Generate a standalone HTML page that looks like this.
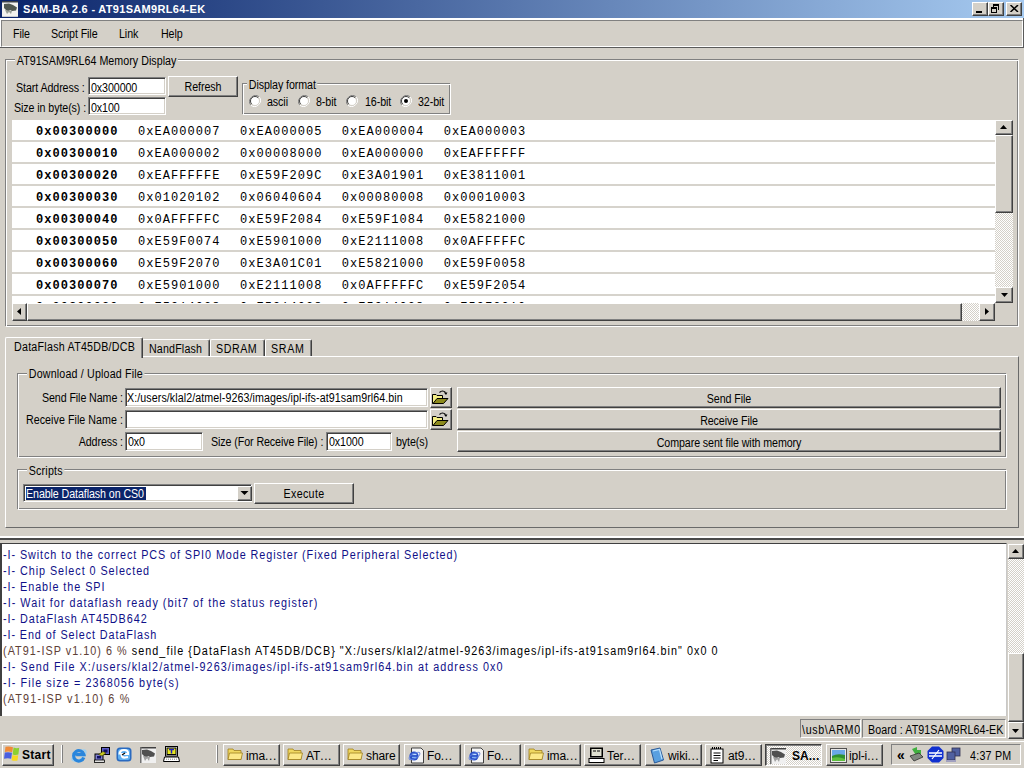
<!DOCTYPE html>
<html><head><meta charset="utf-8">
<style>
*{margin:0;padding:0;box-sizing:border-box}
html,body{width:1024px;height:768px;overflow:hidden;background:#d4d0c8;font-family:"Liberation Sans",sans-serif;font-size:11px;color:#000}
.a{position:absolute}
.t{position:absolute;white-space:nowrap;line-height:13px;font-size:12px;letter-spacing:-0.1px;transform:scaleX(0.89);transform-origin:0 0}
.gt{background:#d4d0c8;padding:0 2px;margin-left:-2px}
.rz{background:#d4d0c8;border-top:1px solid #fff;border-left:1px solid #fff;border-right:1px solid #404040;border-bottom:1px solid #404040;box-shadow:inset -1px -1px 0 #808080}
.sk{background:#fff;border-top:1px solid #808080;border-left:1px solid #808080;border-right:1px solid #fff;border-bottom:1px solid #fff;box-shadow:inset 1px 1px 0 #404040,inset -1px -1px 0 #d4d0c8}
.mono{position:absolute;white-space:nowrap;font-family:"Liberation Mono",monospace;font-size:12px;line-height:15px;letter-spacing:1.05px}
.log{position:absolute;white-space:nowrap;font-size:12px;line-height:16px;letter-spacing:0.35px;color:#101088;transform:scaleX(0.9);transform-origin:0 0}
.dith{background-color:#fff;background-image:linear-gradient(45deg,#d4d0c8 25%,transparent 25%,transparent 75%,#d4d0c8 75%),linear-gradient(45deg,#d4d0c8 25%,transparent 25%,transparent 75%,#d4d0c8 75%);background-size:2px 2px;background-position:0 0,1px 1px}
</style></head><body>
<div class="a " style="left:0px;top:0px;width:1024px;height:18px;background:linear-gradient(to right,#0a246a,#a6caf0)"></div>
<svg class="a" style="left:2px;top:1px" width="16" height="16" viewBox="0 0 16 16">
<rect x="0" y="0" width="16" height="16" fill="#f2f2ee"/>
<rect x="0" y="0" width="16" height="1.5" fill="#3a4048"/>
<rect x="0" y="15" width="16" height="1" fill="#c8ccd0"/>
<path d="M2 3 L7 2.5 L11 4 L15 6.5 L14 9.5 L10 10 L8 9 L6 11 L4 9 L2 7 Z" fill="#505850"/>
<path d="M3 9 L5 13 L7 11 L9 13 L10 10 Z" fill="#9aa098"/>
</svg>
<div class="t" style="left:23px;top:3px;color:#fff;font-weight:bold;font-size:11px;letter-spacing:0.31px;transform:none">SAM-BA 2.6 - AT91SAM9RL64-EK</div>
<div class="a rz" style="left:972px;top:2px;width:16px;height:14px;"></div>
<div class="a rz" style="left:988px;top:2px;width:16px;height:14px;"></div>
<div class="a rz" style="left:1006px;top:2px;width:16px;height:14px;"></div>
<div class="a " style="left:976px;top:11px;width:6px;height:2px;background:#000"></div>
<div class="a" style="left:991px;top:7px;width:6px;height:6px;border:1px solid #000;border-top-width:2px"></div>
<div class="a" style="left:993px;top:4px;width:6px;height:6px;border:1px solid #000;border-top-width:2px;border-left:none;border-bottom:none"></div>
<div class="a " style="left:993px;top:4px;width:1px;height:3px;background:#000"></div>
<svg class="a" style="left:1010px;top:5px" width="9" height="7" viewBox="0 0 9 7"><path d="M0.5 0 L8 7 M8 0 L0.5 7" stroke="#000" stroke-width="1.5"/></svg>
<div class="a " style="left:0px;top:18px;width:1024px;height:2px;background:#fff"></div>
<div class="a " style="left:0px;top:18px;width:1px;height:30px;background:#fff"></div>
<div class="a " style="left:0px;top:47px;width:1024px;height:1px;background:#5a5a5a"></div>
<div class="a " style="left:1023px;top:18px;width:1px;height:30px;background:#5a5a5a"></div>
<div class="a" style="left:1px;top:20px;width:1022px;height:27px;border-top:1px solid #808080;border-left:1px solid #808080;border-right:1px solid #fff;border-bottom:1px solid #fff"></div>
<div class="t" style="left:13px;top:28px;">File</div>
<div class="t" style="left:51px;top:28px;">Script File</div>
<div class="t" style="left:119px;top:28px;">Link</div>
<div class="t" style="left:161px;top:28px;">Help</div>
<div class="a" style="left:5px;top:59px;width:1013px;height:267px;border:1px solid #808080"></div>
<div class="a" style="left:6px;top:60px;width:1013px;height:267px;border:1px solid #fff;border-right:none;border-bottom:none"></div>
<div class="a" style="left:6px;top:326px;width:1013px;height:1px;background:#fff"></div>
<div class="a" style="left:1018px;top:60px;width:1px;height:267px;background:#fff"></div>
<div class="t gt" style="left:17px;top:55px;letter-spacing:0.03px">AT91SAM9RL64 Memory Display</div>
<div class="t" style="left:16px;top:82px;">Start Address :</div>
<div class="t" style="left:14px;top:102px;">Size in byte(s) :</div>
<div class="a sk" style="left:88px;top:77px;width:78px;height:18px;"></div>
<div class="t" style="left:91px;top:82px;">0x300000</div>
<div class="a sk" style="left:88px;top:97px;width:78px;height:18px;"></div>
<div class="t" style="left:91px;top:102px;">0x100</div>
<div class="a rz" style="left:168px;top:76px;width:70px;height:21px;"></div>
<div class="t" style="left:168px;top:81px;width:70px;text-align:center;transform-origin:50% 0">Refresh</div>
<div class="a" style="left:242px;top:83px;width:208px;height:31px;border:1px solid #808080"></div>
<div class="a" style="left:243px;top:84px;width:208px;height:31px;border:1px solid #fff;border-right:none;border-bottom:none"></div>
<div class="a" style="left:243px;top:114px;width:208px;height:1px;background:#fff"></div>
<div class="a" style="left:450px;top:84px;width:1px;height:31px;background:#fff"></div>
<div class="t gt" style="left:249px;top:79px;">Display format</div>
<svg class="a" style="left:249px;top:95px" width="12" height="12" viewBox="0 0 12 12">
<path d="M10.2 1.8 A6 6 0 0 0 1.8 10.2" stroke="#808080" stroke-width="1" fill="none"/>
<path d="M1.8 10.2 A6 6 0 0 0 10.2 1.8" stroke="#fff" stroke-width="1" fill="none"/>
<circle cx="6" cy="6" r="4.5" fill="#fff"/>
<path d="M9.2 2.8 A4.5 4.5 0 0 0 2.8 9.2" stroke="#404040" stroke-width="1" fill="none"/>
<path d="M2.8 9.2 A4.5 4.5 0 0 0 9.2 2.8" stroke="#d4d0c8" stroke-width="1" fill="none"/>

</svg>
<div class="t" style="left:267px;top:96px;">ascii</div>
<svg class="a" style="left:298px;top:95px" width="12" height="12" viewBox="0 0 12 12">
<path d="M10.2 1.8 A6 6 0 0 0 1.8 10.2" stroke="#808080" stroke-width="1" fill="none"/>
<path d="M1.8 10.2 A6 6 0 0 0 10.2 1.8" stroke="#fff" stroke-width="1" fill="none"/>
<circle cx="6" cy="6" r="4.5" fill="#fff"/>
<path d="M9.2 2.8 A4.5 4.5 0 0 0 2.8 9.2" stroke="#404040" stroke-width="1" fill="none"/>
<path d="M2.8 9.2 A4.5 4.5 0 0 0 9.2 2.8" stroke="#d4d0c8" stroke-width="1" fill="none"/>

</svg>
<div class="t" style="left:316px;top:96px;">8-bit</div>
<svg class="a" style="left:346px;top:95px" width="12" height="12" viewBox="0 0 12 12">
<path d="M10.2 1.8 A6 6 0 0 0 1.8 10.2" stroke="#808080" stroke-width="1" fill="none"/>
<path d="M1.8 10.2 A6 6 0 0 0 10.2 1.8" stroke="#fff" stroke-width="1" fill="none"/>
<circle cx="6" cy="6" r="4.5" fill="#fff"/>
<path d="M9.2 2.8 A4.5 4.5 0 0 0 2.8 9.2" stroke="#404040" stroke-width="1" fill="none"/>
<path d="M2.8 9.2 A4.5 4.5 0 0 0 9.2 2.8" stroke="#d4d0c8" stroke-width="1" fill="none"/>

</svg>
<div class="t" style="left:365px;top:96px;">16-bit</div>
<svg class="a" style="left:400px;top:95px" width="12" height="12" viewBox="0 0 12 12">
<path d="M10.2 1.8 A6 6 0 0 0 1.8 10.2" stroke="#808080" stroke-width="1" fill="none"/>
<path d="M1.8 10.2 A6 6 0 0 0 10.2 1.8" stroke="#fff" stroke-width="1" fill="none"/>
<circle cx="6" cy="6" r="4.5" fill="#fff"/>
<path d="M9.2 2.8 A4.5 4.5 0 0 0 2.8 9.2" stroke="#404040" stroke-width="1" fill="none"/>
<path d="M2.8 9.2 A4.5 4.5 0 0 0 9.2 2.8" stroke="#d4d0c8" stroke-width="1" fill="none"/>
<circle cx="6" cy="6" r="2" fill="#000"/>
</svg>
<div class="t" style="left:418px;top:96px;">32-bit</div>
<div class="a " style="left:12px;top:120px;width:983px;height:183px;background:#fff"></div>
<div class="a" style="left:12px;top:120px;width:983px;height:183px;overflow:hidden">
<div class="a" style="left:0;top:20px;width:983px;height:2px;background:#d6d3cc"></div>
<div class="mono" style="left:24px;top:5px;font-weight:bold">0x00300000</div>
<div class="mono" style="left:126.0px;top:5px">0xEA000007</div>
<div class="mono" style="left:227.9px;top:5px">0xEA000005</div>
<div class="mono" style="left:329.8px;top:5px">0xEA000004</div>
<div class="mono" style="left:431.70000000000005px;top:5px">0xEA000003</div>
<div class="a" style="left:0;top:42px;width:983px;height:2px;background:#d6d3cc"></div>
<div class="mono" style="left:24px;top:27px;font-weight:bold">0x00300010</div>
<div class="mono" style="left:126.0px;top:27px">0xEA000002</div>
<div class="mono" style="left:227.9px;top:27px">0x00008000</div>
<div class="mono" style="left:329.8px;top:27px">0xEA000000</div>
<div class="mono" style="left:431.70000000000005px;top:27px">0xEAFFFFFF</div>
<div class="a" style="left:0;top:64px;width:983px;height:2px;background:#d6d3cc"></div>
<div class="mono" style="left:24px;top:49px;font-weight:bold">0x00300020</div>
<div class="mono" style="left:126.0px;top:49px">0xEAFFFFFE</div>
<div class="mono" style="left:227.9px;top:49px">0xE59F209C</div>
<div class="mono" style="left:329.8px;top:49px">0xE3A01901</div>
<div class="mono" style="left:431.70000000000005px;top:49px">0xE3811001</div>
<div class="a" style="left:0;top:86px;width:983px;height:2px;background:#d6d3cc"></div>
<div class="mono" style="left:24px;top:71px;font-weight:bold">0x00300030</div>
<div class="mono" style="left:126.0px;top:71px">0x01020102</div>
<div class="mono" style="left:227.9px;top:71px">0x06040604</div>
<div class="mono" style="left:329.8px;top:71px">0x00080008</div>
<div class="mono" style="left:431.70000000000005px;top:71px">0x00010003</div>
<div class="a" style="left:0;top:108px;width:983px;height:2px;background:#d6d3cc"></div>
<div class="mono" style="left:24px;top:93px;font-weight:bold">0x00300040</div>
<div class="mono" style="left:126.0px;top:93px">0x0AFFFFFC</div>
<div class="mono" style="left:227.9px;top:93px">0xE59F2084</div>
<div class="mono" style="left:329.8px;top:93px">0xE59F1084</div>
<div class="mono" style="left:431.70000000000005px;top:93px">0xE5821000</div>
<div class="a" style="left:0;top:130px;width:983px;height:2px;background:#d6d3cc"></div>
<div class="mono" style="left:24px;top:115px;font-weight:bold">0x00300050</div>
<div class="mono" style="left:126.0px;top:115px">0xE59F0074</div>
<div class="mono" style="left:227.9px;top:115px">0xE5901000</div>
<div class="mono" style="left:329.8px;top:115px">0xE2111008</div>
<div class="mono" style="left:431.70000000000005px;top:115px">0x0AFFFFFC</div>
<div class="a" style="left:0;top:152px;width:983px;height:2px;background:#d6d3cc"></div>
<div class="mono" style="left:24px;top:137px;font-weight:bold">0x00300060</div>
<div class="mono" style="left:126.0px;top:137px">0xE59F2070</div>
<div class="mono" style="left:227.9px;top:137px">0xE3A01C01</div>
<div class="mono" style="left:329.8px;top:137px">0xE5821000</div>
<div class="mono" style="left:431.70000000000005px;top:137px">0xE59F0058</div>
<div class="a" style="left:0;top:174px;width:983px;height:2px;background:#d6d3cc"></div>
<div class="mono" style="left:24px;top:159px;font-weight:bold">0x00300070</div>
<div class="mono" style="left:126.0px;top:159px">0xE5901000</div>
<div class="mono" style="left:227.9px;top:159px">0xE2111008</div>
<div class="mono" style="left:329.8px;top:159px">0x0AFFFFFC</div>
<div class="mono" style="left:431.70000000000005px;top:159px">0xE59F2054</div>
<div class="mono" style="left:24px;top:181px;font-weight:bold">0x00300080</div>
<div class="mono" style="left:126.0px;top:181px">0xE5914028</div>
<div class="mono" style="left:227.9px;top:181px">0xE5914028</div>
<div class="mono" style="left:329.8px;top:181px">0xE5914028</div>
<div class="mono" style="left:431.70000000000005px;top:181px">0xE59F2010</div>
</div>
<div class="a dith" style="left:995px;top:120px;width:18px;height:183px;"></div>
<div class="a rz" style="left:995px;top:120px;width:18px;height:15px;"></div>
<svg class="a" style="left:1000px;top:125px" width="7" height="4"><path d="M3.5 0 L7 4 L0 4 Z" fill="#000"/></svg>
<div class="a rz" style="left:995px;top:135px;width:18px;height:78px;"></div>
<div class="a rz" style="left:995px;top:287px;width:18px;height:16px;"></div>
<svg class="a" style="left:1001px;top:293px" width="7" height="4"><path d="M0 0 L7 0 L3.5 4 Z" fill="#000"/></svg>
<div class="a dith" style="left:12px;top:303px;width:983px;height:18px;"></div>
<div class="a rz" style="left:12px;top:303px;width:15px;height:18px;"></div>
<svg class="a" style="left:17px;top:308px" width="4" height="7"><path d="M4 0 L4 7 L0 3.5 Z" fill="#000"/></svg>
<div class="a rz" style="left:27px;top:303px;width:935px;height:18px;"></div>
<div class="a rz" style="left:979px;top:303px;width:16px;height:18px;"></div>
<svg class="a" style="left:985px;top:308px" width="4" height="7"><path d="M0 0 L0 7 L4 3.5 Z" fill="#000"/></svg>
<div class="a" style="left:5px;top:356px;width:1014px;height:172px;border-top:1px solid #fff;border-left:1px solid #fff;border-right:1px solid #6a6a6a;border-bottom:1px solid #6a6a6a"></div>
<div class="a" style="left:142px;top:339px;width:68px;height:17px;border-top:1px solid #fff;border-left:1px solid #fff;border-right:1px solid #404040;box-shadow:inset -1px 0 0 #808080;border-radius:2px 2px 0 0"></div>
<div class="t" style="left:149px;top:343px;letter-spacing:0.18px">NandFlash</div>
<div class="a" style="left:210px;top:339px;width:55px;height:17px;border-top:1px solid #fff;border-left:1px solid #fff;border-right:1px solid #404040;box-shadow:inset -1px 0 0 #808080;border-radius:2px 2px 0 0"></div>
<div class="t" style="left:216px;top:343px;letter-spacing:0.6px">SDRAM</div>
<div class="a" style="left:265px;top:339px;width:47px;height:17px;border-top:1px solid #fff;border-left:1px solid #fff;border-right:1px solid #404040;box-shadow:inset -1px 0 0 #808080;border-radius:2px 2px 0 0"></div>
<div class="t" style="left:271px;top:343px;letter-spacing:0.8px">SRAM</div>
<div class="a" style="left:5px;top:337px;width:138px;height:21px;background:#d4d0c8;border-top:1px solid #fff;border-left:1px solid #fff;border-right:1px solid #404040;box-shadow:inset -1px 0 0 #808080;border-radius:2px 2px 0 0"></div>
<div class="t" style="left:14px;top:341px;letter-spacing:0.28px">DataFlash AT45DB/DCB</div>
<div class="a" style="left:17px;top:373px;width:989px;height:84px;border:1px solid #808080"></div>
<div class="a" style="left:18px;top:374px;width:989px;height:84px;border:1px solid #fff;border-right:none;border-bottom:none"></div>
<div class="a" style="left:18px;top:457px;width:989px;height:1px;background:#fff"></div>
<div class="a" style="left:1006px;top:374px;width:1px;height:84px;background:#fff"></div>
<div class="t gt" style="left:29px;top:368px;letter-spacing:0.19px">Download / Upload File</div>
<div class="t" style="left:123px;top:392px;transform:translateX(-100%) scaleX(0.89);transform-origin:100% 0">Send File Name :</div>
<div class="t" style="left:123px;top:414px;letter-spacing:0.05px;transform:translateX(-100%) scaleX(0.89);transform-origin:100% 0">Receive File Name :</div>
<div class="t" style="left:123px;top:436px;transform:translateX(-100%) scaleX(0.89);transform-origin:100% 0">Address :</div>
<div class="a sk" style="left:125px;top:388px;width:303px;height:19px;"></div>
<div class="t" style="left:127px;top:392px;letter-spacing:0.09px">X:/users/klal2/atmel-9263/images/ipl-ifs-at91sam9rl64.bin</div>
<div class="a sk" style="left:125px;top:410px;width:303px;height:19px;"></div>
<div class="a sk" style="left:125px;top:432px;width:78px;height:19px;"></div>
<div class="t" style="left:128px;top:436px;">0x0</div>
<div class="t" style="left:211px;top:436px;">Size (For Receive File) :</div>
<div class="a sk" style="left:326px;top:432px;width:66px;height:19px;"></div>
<div class="t" style="left:329px;top:436px;">0x1000</div>
<div class="t" style="left:396px;top:436px;">byte(s)</div>
<div class="a rz" style="left:430px;top:387px;width:22px;height:21px;"></div>
<svg class="a" style="left:431px;top:389px" width="18" height="16" viewBox="0 0 18 16">
<path d="M8.5 3.5 Q11.5 0.5 14.5 3.5" stroke="#000" stroke-width="1.1" fill="none"/><path d="M13 3.5 L16.5 3.5 L15 6 Z" fill="#000"/>
<path d="M1.5 5.5 L5 5.5 L6 6.5 L11.5 6.5 L11.5 14.5 L1.5 14.5 Z" fill="#f4ee84" stroke="#000" stroke-width="1"/>
<path d="M2 14.5 L6 9.5 L17 9.5 L12.5 14.5 Z" fill="#8c8a1c" stroke="#000" stroke-width="1"/>
</svg>
<div class="a rz" style="left:430px;top:409px;width:22px;height:21px;"></div>
<svg class="a" style="left:431px;top:411px" width="18" height="16" viewBox="0 0 18 16">
<path d="M8.5 3.5 Q11.5 0.5 14.5 3.5" stroke="#000" stroke-width="1.1" fill="none"/><path d="M13 3.5 L16.5 3.5 L15 6 Z" fill="#000"/>
<path d="M1.5 5.5 L5 5.5 L6 6.5 L11.5 6.5 L11.5 14.5 L1.5 14.5 Z" fill="#f4ee84" stroke="#000" stroke-width="1"/>
<path d="M2 14.5 L6 9.5 L17 9.5 L12.5 14.5 Z" fill="#8c8a1c" stroke="#000" stroke-width="1"/>
</svg>
<div class="a rz" style="left:457px;top:387px;width:544px;height:21px;"></div>
<div class="t" style="left:457px;top:393px;width:544px;text-align:center;transform-origin:50% 0">Send File</div>
<div class="a rz" style="left:457px;top:409px;width:544px;height:21px;"></div>
<div class="t" style="left:457px;top:415px;width:544px;text-align:center;transform-origin:50% 0">Receive File</div>
<div class="a rz" style="left:457px;top:431px;width:544px;height:21px;"></div>
<div class="t" style="left:457px;top:437px;width:544px;text-align:center;transform-origin:50% 0">Compare sent file with memory</div>
<div class="a" style="left:17px;top:469px;width:989px;height:40px;border:1px solid #808080"></div>
<div class="a" style="left:18px;top:470px;width:989px;height:40px;border:1px solid #fff;border-right:none;border-bottom:none"></div>
<div class="a" style="left:18px;top:509px;width:989px;height:1px;background:#fff"></div>
<div class="a" style="left:1006px;top:470px;width:1px;height:40px;background:#fff"></div>
<div class="t gt" style="left:29px;top:465px;letter-spacing:0.2px">Scripts</div>
<div class="a sk" style="left:23px;top:484px;width:229px;height:18px;"></div>
<div class="a " style="left:26px;top:487px;width:120px;height:13px;background:#0a246a"></div>
<div class="t" style="left:26px;top:488px;color:#fff">Enable Dataflash on CS0</div>
<div class="a rz" style="left:237px;top:486px;width:15px;height:15px;"></div>
<svg class="a" style="left:240px;top:491px" width="9" height="5"><path d="M0.5 0 L8.5 0 L4.5 4 Z" fill="#000"/></svg>
<div class="a rz" style="left:254px;top:483px;width:100px;height:21px;"></div>
<div class="t" style="left:254px;top:488px;width:100px;text-align:center;transform-origin:50% 0;letter-spacing:0.39px">Execute</div>
<div class="a " style="left:0px;top:536px;width:1024px;height:2px;background:#fff"></div>
<div class="a " style="left:0px;top:538px;width:1024px;height:2px;background:#4a4a4a"></div>
<div class="a" style="left:0;top:543px;width:1007px;height:173px;background:#fff;border-top:1px solid #404040;border-left:2px solid #404040;border-right:1px solid #c8c8c8"></div>
<div class="log" style="left:3px;top:547px;letter-spacing:1.03px">-I- Switch to the correct PCS of SPI0 Mode Register (Fixed Peripheral Selected)</div>
<div class="log" style="left:3px;top:563px;letter-spacing:1.05px">-I- Chip Select 0 Selected</div>
<div class="log" style="left:3px;top:579px;letter-spacing:1.06px">-I- Enable the SPI</div>
<div class="log" style="left:3px;top:595px;letter-spacing:1.15px">-I- Wait for dataflash ready (bit7 of the status register)</div>
<div class="log" style="left:3px;top:611px;letter-spacing:1.05px">-I- DataFlash AT45DB642</div>
<div class="log" style="left:3px;top:627px;letter-spacing:1.01px">-I- End of Select DataFlash</div>
<div class="log" style="left:3px;top:643px;letter-spacing:1.15px"><span style="color:#5e4036">(AT91-ISP v1.10) 6 % </span><span style="color:#000">send_file {DataFlash AT45DB/DCB} "X:/users/klal2/atmel-9263/images/ipl-ifs-at91sam9rl64.bin" 0x0 0</span></div>
<div class="log" style="left:3px;top:659px;letter-spacing:1.17px">-I- Send File X:/users/klal2/atmel-9263/images/ipl-ifs-at91sam9rl64.bin at address 0x0</div>
<div class="log" style="left:3px;top:675px;letter-spacing:1.2px">-I- File size = 2368056 byte(s)</div>
<div class="log" style="left:3px;top:691px;letter-spacing:1.3px"><span style="color:#5e4036">(AT91-ISP v1.10) 6 %</span></div>
<div class="a dith" style="left:1008px;top:544px;width:16px;height:195px;"></div>
<div class="a rz" style="left:1008px;top:544px;width:16px;height:15px;"></div>
<svg class="a" style="left:1012px;top:549px" width="7" height="4"><path d="M3.5 0 L7 4 L0 4 Z" fill="#000"/></svg>
<div class="a rz" style="left:1008px;top:653px;width:16px;height:69px;"></div>
<div class="a rz" style="left:1008px;top:722px;width:16px;height:17px;"></div>
<svg class="a" style="left:1012px;top:729px" width="7" height="4"><path d="M0 0 L7 0 L3.5 4 Z" fill="#000"/></svg>
<div class="a" style="left:800px;top:719px;width:61px;height:19px;border-top:1px solid #808080;border-left:1px solid #808080;border-right:1px solid #fff;border-bottom:1px solid #fff"></div>
<div class="t" style="left:802px;top:724px;letter-spacing:0.74px">\usb\ARM0</div>
<div class="a" style="left:862px;top:719px;width:144px;height:19px;border-top:1px solid #808080;border-left:1px solid #808080;border-right:1px solid #fff;border-bottom:1px solid #fff"></div>
<div class="t" style="left:868px;top:724px;letter-spacing:0.07px">Board : AT91SAM9RL64-EK</div>
<div class="a " style="left:0px;top:740px;width:1024px;height:28px;background:#d4d0c8"></div>
<div class="a " style="left:0px;top:741px;width:1024px;height:1px;background:#fff"></div>
<div class="a rz" style="left:2px;top:744px;width:52px;height:22px;"></div>
<svg class="a" style="left:4px;top:746px" width="16" height="15" viewBox="0 0 16 15">
<path d="M1.5 0.8 Q5 -0.2 9 1.2 L8.2 6.2 Q4.5 5 0.8 6 Z" fill="#f08a38"/>
<path d="M9.6 1.5 Q12.5 2.6 15.2 1.8 L14.4 8.6 Q11.5 9.4 8.6 8.4 Z" fill="#8cd030"/>
<path d="M0.8 6.6 Q4.5 5.6 8 6.8 L7.2 12.8 Q3.8 11.8 0 12.8 Z" fill="#4a5ee0"/>
<path d="M8.5 9 Q11 10 14.2 9.2 L13.5 14.5 Q10.5 15.2 7.6 14.2 Z" fill="#f8d820"/>
</svg>
<div class="t" style="left:22px;top:749px;font-weight:bold;font-size:12px;letter-spacing:0.3px;transform:none">Start</div>
<div class="a " style="left:61px;top:745px;width:1px;height:18px;background:#fff"></div>
<div class="a " style="left:62px;top:745px;width:1px;height:18px;background:#808080"></div>
<svg class="a" style="left:70px;top:746px" width="18" height="18" viewBox="0 0 18 18">
<ellipse cx="9" cy="9.5" rx="8.2" ry="3.6" transform="rotate(-35 9 9.5)" stroke="#9ad0f4" stroke-width="1.4" fill="none"/>
<path d="M13.8 11.5 A5.2 5.2 0 1 1 13.9 8.6 L6.2 8.6" stroke="#2a86dc" stroke-width="3.2" fill="none"/>
<rect x="5" y="7.6" width="8.5" height="2" fill="#2a86dc"/>
</svg>
<svg class="a" style="left:94px;top:746px" width="17" height="17" viewBox="0 0 17 17">
<rect x="7.5" y="1.5" width="8" height="7" fill="#6060c8" stroke="#000" stroke-width="1"/>
<rect x="9.5" y="3.5" width="4" height="3" fill="#101060"/>
<rect x="1" y="8" width="8" height="6.5" fill="#8080d0" stroke="#000" stroke-width="1"/>
<rect x="3" y="10" width="4" height="2.5" fill="#101060"/>
<rect x="0.5" y="14" width="10" height="2.5" fill="#e0e0e0" stroke="#000" stroke-width="0.8"/>
<path d="M4.5 8.5 L9 5.5 L12 7 L8 10 Z" fill="#c8c820" stroke="#303000" stroke-width="0.6"/>
</svg>
<svg class="a" style="left:116px;top:747px" width="16" height="15" viewBox="0 0 16 15">
<rect x="0.5" y="0.5" width="15" height="14" rx="3.5" fill="#2a6ac0"/>
<rect x="2" y="2" width="12" height="11" rx="2.5" fill="#60b0f0"/>
<path d="M3.5 7.5 Q3.5 3 8 3 Q12.5 3 12 7 L5.5 7 Q5.5 11 9 10.5 L12 10" stroke="#fff" stroke-width="2.2" fill="none"/>
<path d="M6 8 L9 6" stroke="#000" stroke-width="1.2"/>
</svg>
<svg class="a" style="left:140px;top:747px" width="16" height="16" viewBox="0 0 16 16">
<rect x="0" y="0" width="16" height="16" fill="#f0f0f0"/>
<rect x="0" y="0" width="16" height="1.5" fill="#404040"/><rect x="0" y="0" width="1.5" height="16" fill="#707070"/>
<path d="M2 3 L7 2.5 L11 4 L15 6.5 L14 9.5 L10 10 L8 9 L6 12 L4 9 L2 7 Z" fill="#505050"/>
<path d="M3 9 L5 14 L7 11 L9 14 L10 10 Z" fill="#a0a0a0"/>
</svg>
<svg class="a" style="left:163px;top:746px" width="17" height="17" viewBox="0 0 17 17">
<rect x="2.5" y="0.5" width="12" height="9.5" fill="#fff" stroke="#000" stroke-width="1"/>
<rect x="3.5" y="1.5" width="10" height="7.5" fill="#000"/>
<rect x="4.5" y="2.5" width="8" height="5.5" fill="#e8e820"/>
<path d="M6 3.6 L11 3.6 M8.5 3.6 L8.5 7.5" stroke="#2020c0" stroke-width="1.5"/>
<path d="M1.5 11 L15.5 11 L16.5 15.5 L0.5 15.5 Z" fill="#fff" stroke="#000" stroke-width="1"/>
<path d="M3 13.2 L14 13.2" stroke="#808080" stroke-width="1" stroke-dasharray="1 1"/>
</svg>
<div class="a " style="left:216px;top:745px;width:1px;height:18px;background:#fff"></div>
<div class="a " style="left:217px;top:745px;width:1px;height:18px;background:#808080"></div>
<div class="a rz" style="left:223px;top:744px;width:57px;height:22px;"></div>
<svg class="a" style="left:227px;top:747px" width="16" height="14" viewBox="0 0 16 14"><path d="M1 2 L6 2 L7 3.5 L14 3.5 L14 12.5 L1 12.5 Z" fill="#f0d860" stroke="#a08020" stroke-width="0.8"/><path d="M1 12.5 L2.5 6 L15.5 6 L14 12.5 Z" fill="#fce888" stroke="#a08020" stroke-width="0.8"/></svg>
<div class="t" style="left:246px;top:750px;letter-spacing:-0.1px;transform:none">ima<span style='letter-spacing:0.6px'>...</span></div>
<div class="a rz" style="left:283px;top:744px;width:57px;height:22px;"></div>
<svg class="a" style="left:287px;top:747px" width="16" height="14" viewBox="0 0 16 14"><path d="M1 2 L6 2 L7 3.5 L14 3.5 L14 12.5 L1 12.5 Z" fill="#f0d860" stroke="#a08020" stroke-width="0.8"/><path d="M1 12.5 L2.5 6 L15.5 6 L14 12.5 Z" fill="#fce888" stroke="#a08020" stroke-width="0.8"/></svg>
<div class="t" style="left:306px;top:750px;letter-spacing:-0.1px;transform:none">AT<span style='letter-spacing:0.6px'>...</span></div>
<div class="a rz" style="left:343px;top:744px;width:57px;height:22px;"></div>
<svg class="a" style="left:347px;top:747px" width="16" height="14" viewBox="0 0 16 14"><path d="M1 2 L6 2 L7 3.5 L14 3.5 L14 12.5 L1 12.5 Z" fill="#f0d860" stroke="#a08020" stroke-width="0.8"/><path d="M1 12.5 L2.5 6 L15.5 6 L14 12.5 Z" fill="#fce888" stroke="#a08020" stroke-width="0.8"/></svg>
<div class="t" style="left:366px;top:750px;letter-spacing:-0.1px;transform:none">share</div>
<div class="a rz" style="left:404px;top:744px;width:57px;height:22px;"></div>
<svg class="a" style="left:408px;top:747px" width="17" height="17" viewBox="0 0 17 17"><path d="M3.5 1 L13 1 L15.5 3.5 L15.5 16 L3.5 16 Z" fill="#f4f4f4" stroke="#404040" stroke-width="1"/><circle cx="6" cy="9" r="4.6" fill="#2a50c8"/><rect x="4" y="6.8" width="4.5" height="1.3" fill="#c0e0ff"/><rect x="4" y="9.8" width="4.5" height="1.3" fill="#80b0f0"/><ellipse cx="6.5" cy="9" rx="6" ry="2.5" transform="rotate(-30 6.5 9)" stroke="#6080e0" stroke-width="0.9" fill="none"/></svg>
<div class="t" style="left:427px;top:750px;letter-spacing:-0.1px;transform:none">Fo<span style='letter-spacing:0.6px'>...</span></div>
<div class="a rz" style="left:464px;top:744px;width:57px;height:22px;"></div>
<svg class="a" style="left:468px;top:747px" width="17" height="17" viewBox="0 0 17 17"><path d="M3.5 1 L13 1 L15.5 3.5 L15.5 16 L3.5 16 Z" fill="#f4f4f4" stroke="#404040" stroke-width="1"/><circle cx="6" cy="9" r="4.6" fill="#2a50c8"/><rect x="4" y="6.8" width="4.5" height="1.3" fill="#c0e0ff"/><rect x="4" y="9.8" width="4.5" height="1.3" fill="#80b0f0"/><ellipse cx="6.5" cy="9" rx="6" ry="2.5" transform="rotate(-30 6.5 9)" stroke="#6080e0" stroke-width="0.9" fill="none"/></svg>
<div class="t" style="left:487px;top:750px;letter-spacing:-0.1px;transform:none">Fo<span style='letter-spacing:0.6px'>...</span></div>
<div class="a rz" style="left:524px;top:744px;width:57px;height:22px;"></div>
<svg class="a" style="left:528px;top:747px" width="16" height="14" viewBox="0 0 16 14"><path d="M1 2 L6 2 L7 3.5 L14 3.5 L14 12.5 L1 12.5 Z" fill="#f0d860" stroke="#a08020" stroke-width="0.8"/><path d="M1 12.5 L2.5 6 L15.5 6 L14 12.5 Z" fill="#fce888" stroke="#a08020" stroke-width="0.8"/></svg>
<div class="t" style="left:547px;top:750px;letter-spacing:-0.1px;transform:none">ima<span style='letter-spacing:0.6px'>...</span></div>
<div class="a rz" style="left:584px;top:744px;width:57px;height:22px;"></div>
<svg class="a" style="left:588px;top:747px" width="17" height="17" viewBox="0 0 17 17"><rect x="2" y="0.5" width="13" height="10" fill="#000"/><rect x="3.5" y="2" width="10" height="7" fill="#e0e0d0"/><path d="M5 4 L8 4 M9 4 L12 4" stroke="#000" stroke-width="1"/><rect x="0.5" y="11" width="16" height="5" fill="#000"/><rect x="1.5" y="12" width="14" height="3" fill="#fff"/></svg>
<div class="t" style="left:607px;top:750px;letter-spacing:-0.1px;transform:none">Ter<span style='letter-spacing:0.6px'>...</span></div>
<div class="a rz" style="left:645px;top:744px;width:57px;height:22px;"></div>
<svg class="a" style="left:649px;top:747px" width="17" height="17" viewBox="0 0 17 17"><path d="M2 3 L11 1 L14.5 13 L5.5 16 Z" fill="#5aa0e0" stroke="#2a5a98" stroke-width="1"/><path d="M4 4 L10.5 2.5 L13 12" stroke="#b8e0ff" stroke-width="1.2" fill="none"/></svg>
<div class="t" style="left:668px;top:750px;letter-spacing:-0.1px;transform:none">wiki<span style='letter-spacing:0.6px'>...</span></div>
<div class="a rz" style="left:705px;top:744px;width:57px;height:22px;"></div>
<svg class="a" style="left:709px;top:747px" width="16" height="17" viewBox="0 0 16 17"><rect x="2" y="2" width="12" height="14" fill="#fff" stroke="#000" stroke-width="1"/><path d="M4.5 6 L11.5 6 M4.5 8.5 L11.5 8.5 M4.5 11 L11.5 11 M4.5 13.5 L9 13.5" stroke="#000" stroke-width="1"/><path d="M3 1 L13 1" stroke="#000" stroke-width="2" stroke-dasharray="1 1"/></svg>
<div class="t" style="left:728px;top:750px;letter-spacing:-0.1px;transform:none">at9<span style='letter-spacing:0.6px'>...</span></div>
<div class="a dith" style="left:765px;top:744px;width:57px;height:22px;border-top:1px solid #404040;border-left:1px solid #404040;border-right:1px solid #fff;border-bottom:1px solid #fff;box-shadow:inset 1px 1px 0 #808080"></div>
<svg class="a" style="left:770px;top:748px" width="16" height="16" viewBox="0 0 16 16"><rect x="0" y="0" width="16" height="16" fill="#f0f0f0"/><rect x="0" y="0" width="16" height="1.5" fill="#404040"/><rect x="0" y="0" width="1.5" height="16" fill="#707070"/><path d="M2 3 L7 2.5 L11 4 L15 6.5 L14 9.5 L10 10 L8 9 L6 12 L4 9 L2 7 Z" fill="#505050"/><path d="M3 9 L5 14 L7 11 L9 14 L10 10 Z" fill="#a0a0a0"/></svg>
<div class="t" style="left:792px;top:750px;font-weight:bold;letter-spacing:0;transform:none">SA<span style='letter-spacing:0.3px'>...</span></div>
<div class="a rz" style="left:826px;top:744px;width:57px;height:22px;"></div>
<svg class="a" style="left:830px;top:747px" width="17" height="17" viewBox="0 0 17 17"><rect x="0.5" y="1.5" width="16" height="14" fill="#e8e8e8" stroke="#505050" stroke-width="1"/><rect x="2" y="3" width="13" height="11" fill="#6aa8e8"/><path d="M2 14 L2 9 Q7 6 15 8 L15 14 Z" fill="#309030"/><path d="M2 14 L2 11 Q8 9 15 12 L15 14 Z" fill="#60c040"/></svg>
<div class="t" style="left:849px;top:750px;letter-spacing:-0.1px;transform:none">ipl-i<span style='letter-spacing:0.6px'>...</span></div>
<div class="a" style="left:891px;top:744px;width:130px;height:21px;border-top:1px solid #808080;border-left:1px solid #808080;border-right:1px solid #fff;border-bottom:1px solid #fff"></div>
<div class="t" style="left:897px;top:749px;font-weight:bold;font-size:14px;letter-spacing:-0.5px;transform:none">&laquo;</div>
<svg class="a" style="left:909px;top:746px" width="15" height="17" viewBox="0 0 15 17"><path d="M3 3 L8 1 L8 4 L12 4 L12 8 L8 8 L8 11 Z" fill="#40b040"/><path d="M1 10 L10 7 L14 11 L5 15 Z" fill="#808880" stroke="#303030" stroke-width="0.8"/></svg>
<svg class="a" style="left:927px;top:746px" width="17" height="17" viewBox="0 0 17 17"><path d="M5 0.5 L12 0.5 L16.5 5 L16.5 12 L12 16.5 L5 16.5 L0.5 12 L0.5 5 Z" fill="#1030d0"/><path d="M2 7 L15 7 M2 10 L15 10" stroke="#fff" stroke-width="1.4"/><path d="M5 13 L12 4" stroke="#fff" stroke-width="1.2"/></svg>
<svg class="a" style="left:946px;top:747px" width="15" height="15" viewBox="0 0 15 15"><rect x="6" y="1" width="8" height="8" fill="#5060a0" stroke="#303050" stroke-width="0.8"/><rect x="1" y="5" width="8" height="8" fill="#5060a0" stroke="#303050" stroke-width="0.8"/><rect x="0" y="13" width="10" height="2" fill="#a0a0c0"/></svg>
<div class="t" style="left:970px;top:750px;letter-spacing:0.27px">4:37 PM</div>
</body></html>
